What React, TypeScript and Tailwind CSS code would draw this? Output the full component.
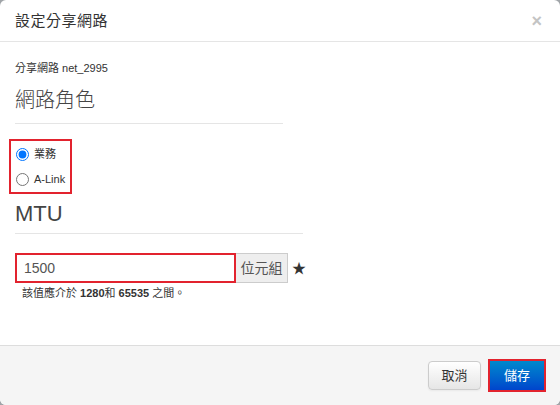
import { useState } from "react";

const font = { fontFamily: '"Liberation Sans", Arial, "Noto Sans CJK TC", sans-serif' };

export default function App() {
  const [role, setRole] = useState("biz");
  const [mtu, setMtu] = useState("1500");

  return (
    <div className="w-[560px] h-[405px] bg-[#a0a4a8] overflow-hidden" style={font}>
      <div className="w-[560px] h-[405px] bg-white rounded-[6px] flex flex-col overflow-hidden">
        {/* header */}
        <div className="h-[42px] shrink-0 border-b border-[#e5e5e5] flex items-center justify-between pl-[15px] pr-[18px]">
          <h3 className="text-[15px] text-[#333] leading-none tracking-[0.5px]">設定分享網路</h3>
          <span className="text-[#c4c4c4] text-[18px] font-bold leading-none">×</span>
        </div>

        {/* body */}
        <div className="flex-1 px-[15px] pt-[19px] text-[#333]">
          <div className="text-[11px] leading-[14px]">分享網路 net_2995</div>
          <div className="mt-[12px] w-[268px] border-b border-[#e5e5e5] pb-[9px]">
            <div className="text-[20px] font-light leading-[27px] text-[#444]">網路角色</div>
          </div>

          <div className="mt-[15px] -ml-[6px] w-[63px] border-2 border-[#e2232e] py-[4px] pl-[5px] flex flex-col gap-[7px]">
            <label className="flex items-center gap-[5px] text-[11px] h-[18px]">
              <input
                type="radio"
                name="role"
                checked={role === "biz"}
                onChange={() => setRole("biz")}
                className="w-[13px] h-[13px] m-0 accent-[#0075ff]"
              />
              業務
            </label>
            <label className="flex items-center gap-[5px] text-[11px] h-[18px]">
              <input
                type="radio"
                name="role"
                checked={role === "alink"}
                onChange={() => setRole("alink")}
                className="w-[13px] h-[13px] m-0 accent-[#0075ff]"
              />
              A-Link
            </label>
          </div>

          <div className="mt-[6px] w-[288px] border-b border-[#e5e5e5] pb-[6px]">
            <div className="text-[22px] leading-[27px] text-[#444]">MTU</div>
          </div>

          <div className="mt-[19px] flex items-center">
            <input
              value={mtu}
              onChange={(e) => setMtu(e.target.value)}
              className="w-[221px] h-[30px] border-2 border-[#e2232e] px-[7px] text-[14px] text-[#555] outline-none"
            />
            <span className="h-[30px] w-[52px] flex items-center justify-center bg-[#eee] border border-l-0 border-[#ccc] text-[14px] text-[#555]">
              位元組
            </span>
            <span className="ml-[4px] text-[14px] text-[#333]">★</span>
          </div>
          <div className="mt-[3px] ml-[7px] text-[11px] text-[#333] leading-[14px]">
            該值應介於 <b>1280</b>和 <b>65535</b> 之間。
          </div>
        </div>

        {/* footer */}
        <div className="h-[60px] shrink-0 bg-[#f5f5f5] border-t border-[#ddd] flex items-center justify-end gap-[7px] pr-[14px]">
          <button className="h-[29px] w-[53px] rounded-[4px] border border-[#ccc] bg-gradient-to-b from-white to-[#e6e6e6] text-[13px] text-[#333] shadow-[inset_0_1px_0_rgba(255,255,255,0.2),0_1px_2px_rgba(0,0,0,0.05)]">
            取消
          </button>
          <button className="h-[33px] w-[58px] border-2 border-[#e2232e] bg-gradient-to-b from-[#0088cc] to-[#0044cc] text-[13px] text-white">
            儲存
          </button>
        </div>
      </div>
    </div>
  );
}
